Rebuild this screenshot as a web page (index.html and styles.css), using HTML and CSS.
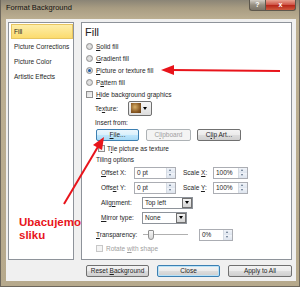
FILE: index.html
```html
<!DOCTYPE html>
<html lang="en">
<head>
    <meta charset="UTF-8">
    <title>Format Background</title>
    <link rel="stylesheet" href="styles.css">
</head>
<body>
    <div class="window">
        <div class="titlebar">
            <span class="title">Format Background</span>
            <div class="caption">
                <span class="cap help">?</span>
                <span class="cap close">x</span>
            </div>
        </div>

        <div class="client">
            <div class="panels">
                <ul class="nav">
                    <li class="selected">Fill</li>
                    <li>Picture Corrections</li>
                    <li>Picture Color</li>
                    <li>Artistic Effects</li>
                </ul>

                <div class="pane">
                    <div class="heading">Fill</div>

                    <div class="opt"><span class="radio"></span><span><u>S</u>olid fill</span></div>
                    <div class="opt"><span class="radio"></span><span><u>G</u>radient fill</span></div>
                    <div class="opt"><span class="radio on"></span><span><u>P</u>icture or texture fill</span></div>
                    <div class="opt"><span class="radio"></span><span>P<u>a</u>ttern fill</span></div>
                    <div class="opt"><span class="check"></span><span><u>H</u>ide background graphics</span></div>

                    <div class="group">
                        <div class="row texture-row">
                            <span class="lbl">Te<u>x</u>ture:</span>
                            <span class="texture-btn"><span class="swatch"></span><span class="tri"></span></span>
                        </div>
                        <div class="row insert-row">Insert from:</div>
                        <div class="row btn-row">
                            <span class="btn hover file-btn"><u>F</u>ile...</span>
                            <span class="btn disabled clip-btn">C<u>l</u>ipboard</span>
                            <span class="btn art-btn">C<u>l</u>ip Art...</span>
                        </div>
                        <div class="row tile-row"><span class="check"></span><span>T<u>i</u>le picture as texture</span></div>
                        <div class="row tiling-row">Tiling options</div>

                        <div class="row field-row first">
                            <span class="flbl w33"><u>O</u>ffset X:</span>
                            <span class="spin w42"><span class="val">0 pt</span><span class="spinner"><i class="up"></i><i class="down"></i></span></span>
                            <span class="flbl w30 scale">Scale <u>X</u>:</span>
                            <span class="spin w35"><span class="val">100%</span><span class="spinner"><i class="up"></i><i class="down"></i></span></span>
                        </div>
                        <div class="row field-row">
                            <span class="flbl w33">Offs<u>e</u>t Y:</span>
                            <span class="spin w42"><span class="val">0 pt</span><span class="spinner"><i class="up"></i><i class="down"></i></span></span>
                            <span class="flbl w30 scale">Scale <u>Y</u>:</span>
                            <span class="spin w35"><span class="val">100%</span><span class="spinner"><i class="up"></i><i class="down"></i></span></span>
                        </div>
                        <div class="row field-row">
                            <span class="flbl w41">Alig<u>n</u>ment:</span>
                            <span class="combo w51"><span class="val">Top left</span><span class="drop"><span class="tri"></span></span></span>
                        </div>
                        <div class="row field-row mirror">
                            <span class="flbl w41"><u>M</u>irror type:</span>
                            <span class="combo w45"><span class="val">None</span><span class="drop"><span class="tri"></span></span></span>
                        </div>
                        <div class="row field-row transp">
                            <span class="flbl w47"><u>T</u>ransparency:</span>
                            <span class="slider"><span class="thumb"></span></span>
                            <span class="spin w34"><span class="val">0%</span><span class="spinner"><i class="up"></i><i class="down"></i></span></span>
                        </div>
                        <div class="row rotate-row"><span class="check dim"></span><span>Rotate <u>w</u>ith shape</span></div>
                    </div>
                </div>
            </div>

            <div class="footer">
                <span class="btn foot w63">Reset <u>B</u>ackground</span>
                <span class="btn foot default w63">Close</span>
                <span class="btn foot w64">Apply to All</span>
            </div>
        </div>

        <!-- red annotation drawn over the dialog -->
        <div class="note">Ubacujemo<br>sliku</div>
        <svg class="arrows" width="300" height="287" viewBox="0 0 300 287">
            <line x1="279" y1="71" x2="170" y2="70" stroke="#e8141b" stroke-width="2"/>
            <polygon points="160,70 173,65 173,75" fill="#e8141b"/>
            <line x1="63" y1="204" x2="98" y2="145" stroke="#e8141b" stroke-width="2"/>
            <polygon points="103,137 101,150 92,145" fill="#e8141b"/>
        </svg>
    </div>
</body>
</html>
```

FILE: styles.css
```css
body {
    margin: 0;
    padding: 0;
    font-family: "Liberation Sans", Arial, sans-serif;
    background: #ffffff;
}

.window {
    position: relative;
    width: 300px;
    height: 287px;
    box-sizing: border-box;
    border: 1px solid #6d675c;
    border-top: none;
    background: linear-gradient(to bottom, #8a8476 0px, #a89c82 8px, #bdb093 20px, #b6a98c 100%);
    display: flex;
    flex-direction: column;
    overflow: hidden;
}

.titlebar {
    height: 19px;
    display: flex;
    align-items: flex-start;
}

.title {
    padding: 3px 0 0 5px;
    font-size: 7.5px;
    line-height: 10px;
    color: #111;
}

.caption {
    margin-left: auto;
    margin-right: 3px;
    display: flex;
}

.cap {
    height: 11px;
    box-sizing: border-box;
    border: 1px solid #5d574c;
    border-top: none;
    color: #fff;
    font-size: 7px;
    font-weight: bold;
    line-height: 10px;
    text-align: center;
}

.help {
    width: 16px;
    border-radius: 0 0 0 3px;
    border-right: none;
    background: linear-gradient(to bottom, #d4cfc6, #958e80 50%, #7b7467);
}

.close {
    width: 31px;
    border-radius: 0 0 3px 0;
    background: linear-gradient(to bottom, #e9a391, #d0584a 45%, #b8281a 55%, #cf5a3e);
}

.client {
    margin: 0 3px 5px 5px;
    height: 263px;
    box-sizing: border-box;
    padding: 3px 4px 0 2px;
    background: #f0f0f0;
    display: flex;
    flex-direction: column;
}

.panels {
    display: flex;
    gap: 7px;
    height: 238px;
}

.nav {
    list-style: none;
    margin: 0;
    padding: 1px 0 0 2px;
    width: 66px;
    box-sizing: border-box;
    background: #fff;
    border: 1px solid #8e939a;
}

.nav li {
    height: 15px;
    line-height: 15px;
    padding-left: 3px;
    font-size: 6.5px;
    color: #1e1e1e;
    box-sizing: border-box;
}

.nav li.selected {
    background: linear-gradient(to bottom, #fdeeaa, #fbdb6e);
    border: 1px solid #e7c560;
    line-height: 13px;
    padding-left: 2px;
}

.pane {
    flex: 1;
    background: #fff;
    border: 1px solid #8e939a;
    font-size: 6.5px;
    color: #1e1e1e;
}

.heading {
    margin: 2px 0 0 3px;
    height: 14px;
    line-height: 14px;
    font-size: 11px;
    color: #222;
}

.opt {
    height: 12px;
    padding-left: 4px;
    display: flex;
    align-items: center;
    gap: 3px;
}

.heading + .opt {
    margin-top: 2px;
}

.radio {
    width: 7px;
    height: 7px;
    box-sizing: border-box;
    border-radius: 50%;
    border: 1px solid #8f8f8f;
    background: radial-gradient(circle, #e6e6e6, #cfcfcf);
    position: relative;
}

.radio.on::after {
    content: "";
    position: absolute;
    left: 1px;
    top: 1px;
    width: 3px;
    height: 3px;
    border-radius: 50%;
    background: #1d5aa8;
}

.check {
    width: 7px;
    height: 7px;
    box-sizing: border-box;
    border: 1px solid #8f8f8f;
    background: linear-gradient(135deg, #dcdcdc, #f8f8f8);
}

.check.dim {
    border-color: #c8c8c8;
    background: #f4f4f4;
}

.group {
    padding-left: 13px;
}

.row {
    display: flex;
    align-items: center;
}

.texture-row {
    height: 15px;
    gap: 10px;
}

.texture-btn {
    width: 24px;
    height: 15px;
    box-sizing: border-box;
    border: 1px solid #707070;
    border-radius: 2px;
    background: linear-gradient(to bottom, #f6f6f6, #dddddd);
    display: flex;
    align-items: center;
    padding-left: 2px;
    gap: 2px;
}

.swatch {
    width: 10px;
    height: 10px;
    background: radial-gradient(circle at 40% 40%, #d8b068, #8a5a24 60%, #5e3a12);
}

.tri {
    width: 0;
    height: 0;
    border-left: 2.5px solid transparent;
    border-right: 2.5px solid transparent;
    border-top: 3px solid #000;
}

.insert-row {
    height: 13px;
}

.btn-row {
    height: 12px;
    padding-left: 1px;
    gap: 7px;
}

.btn {
    height: 12px;
    box-sizing: border-box;
    border: 1px solid #707070;
    border-radius: 2px;
    background: linear-gradient(to bottom, #f3f3f3 0%, #ebebeb 50%, #dddddd 51%, #cfcfcf 100%);
    font-size: 6.5px;
    line-height: 10px;
    text-align: center;
    color: #1e1e1e;
}

.btn.hover {
    border-color: #3c7fb1;
    background: linear-gradient(to bottom, #eaf6fd 0%, #d9f0fc 50%, #bee6fd 51%, #a7d9f5 100%);
}

.btn.disabled {
    border-color: #adb2b5;
    background: #f4f4f4;
    color: #a0a0a0;
}

.btn.default {
    border-color: #3c7fb1;
    box-shadow: inset 0 0 0 1px #b8e2f8;
}

.file-btn { width: 43px; }
.clip-btn { width: 45px; }
.art-btn { width: 44px; margin-left: -1px; }

.tile-row {
    margin-top: 2px;
    height: 12px;
    padding-left: 3px;
    gap: 2px;
}

.tiling-row {
    height: 10px;
    padding-left: 1px;
}

.field-row {
    height: 12px;
    margin-top: 3px;
    padding-left: 6px;
}

.field-row.first {
    margin-top: 2px;
}

.field-row.transp {
    margin-top: 5px;
    padding-left: 1px;
}

.flbl {
    flex: none;
}

.w30 { width: 30px; }
.w33 { width: 33px; }
.w34 { width: 34px; }
.w35 { width: 35px; }
.w41 { width: 41px; }
.w42 { width: 42px; }
.w45 { width: 45px; }
.w47 { width: 47px; }
.w51 { width: 51px; }
.w63 { width: 63px; }
.w64 { width: 64px; }

.scale {
    margin-left: 7px;
}

.spin, .combo {
    height: 12px;
    box-sizing: border-box;
    border: 1px solid #abadb3;
    background: #fff;
    display: flex;
    flex: none;
}

.val {
    flex: 1;
    padding-left: 2px;
    line-height: 10px;
}

.spinner {
    width: 8px;
    display: flex;
    flex-direction: column;
    border-left: 1px solid #d5dbe3;
}

.spinner i {
    flex: 1;
    background: linear-gradient(to bottom, #f1f4f9, #dde4ee);
    position: relative;
}

.spinner i::after {
    content: "";
    position: absolute;
    left: 2px;
    top: 1px;
    border-left: 1.5px solid transparent;
    border-right: 1.5px solid transparent;
}

.spinner .up::after {
    border-bottom: 2px solid #5c6f86;
}

.spinner .down::after {
    border-top: 2px solid #5c6f86;
}

.combo {
    border-color: #8e939a;
}

.drop {
    width: 10px;
    box-sizing: border-box;
    border: 1px solid #707070;
    background: linear-gradient(to bottom, #f3f3f3, #d4d4d4);
    display: flex;
    align-items: center;
    justify-content: center;
}

.slider {
    width: 45px;
    height: 12px;
    position: relative;
    flex: none;
}

.slider::before {
    content: "";
    position: absolute;
    left: 0;
    right: 0;
    top: 5px;
    height: 1px;
    background: #b0b0b0;
    border-bottom: 1px solid #fff;
}

.thumb {
    position: absolute;
    left: 5px;
    top: 1px;
    width: 6px;
    height: 10px;
    box-sizing: border-box;
    border: 1px solid #8f8f8f;
    border-radius: 1px 1px 3px 3px;
    background: linear-gradient(to bottom, #f6f6f6, #d6d6d6);
}

.transp .spin {
    margin-left: 11px;
}

.rotate-row {
    margin-top: 2px;
    height: 12px;
    padding-left: 1px;
    gap: 3px;
    color: #a0a0a0;
}

.footer {
    margin-top: 5px;
    display: flex;
    justify-content: flex-end;
    gap: 8px;
}

.note {
    position: absolute;
    left: 18px;
    top: 216px;
    font-size: 11.5px;
    line-height: 13px;
    font-weight: bold;
    color: #e8141b;
}

.arrows {
    position: absolute;
    left: 0;
    top: 0;
}
```
